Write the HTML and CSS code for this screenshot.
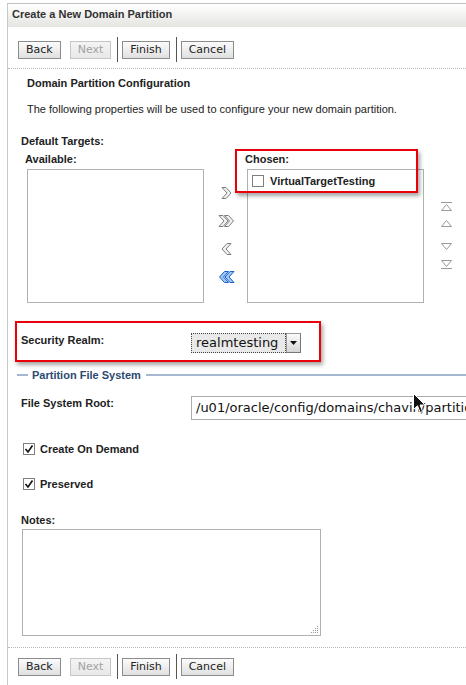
FILE: index.html
```html
<!DOCTYPE html>
<html>
<head>
<meta charset="utf-8">
<title>Create a New Domain Partition</title>
<link rel="stylesheet" href="styles.css">
</head>
<body>
<div class="panel">
  <div class="header">Create a New Domain Partition</div>
  <div class="btnbar">
    <span class="btn">Back</span>
    <span class="btn disabled">Next</span>
    <span class="sep"></span>
    <span class="btn">Finish</span>
    <span class="sep"></span>
    <span class="btn">Cancel</span>
  </div>
  <div class="dots"></div>

  <div class="lbl sec-title">Domain Partition Configuration</div>
  <div class="desc">The following properties will be used to configure your new domain partition.</div>

  <div class="lbl targets">Default Targets:</div>
  <div class="shuttle">
    <div class="col avail">
      <div class="lbl">Available:</div>
      <div class="listbox"></div>
    </div>
    <div class="moves">
      <svg width="11" height="14" viewBox="0 0 11 14"><polygon points="1,1.5 5,1.5 10,7 5,12.5 1,12.5 6,7" fill="#f2f2f2" stroke="#7e7e7e"/></svg>
      <svg width="17" height="14" viewBox="0 0 17 14"><polygon points="1,1.5 5,1.5 10,7 5,12.5 1,12.5 6,7" fill="#f2f2f2" stroke="#7e7e7e"/><polygon points="6.5,1.5 10.5,1.5 15.5,7 10.5,12.5 6.5,12.5 11.5,7" fill="#f2f2f2" stroke="#7e7e7e"/></svg>
      <svg width="11" height="14" viewBox="0 0 11 14"><polygon points="10,1.5 6,1.5 1,7 6,12.5 10,12.5 5,7" fill="#f2f2f2" stroke="#7e7e7e"/></svg>
      <svg width="17" height="14" viewBox="0 0 17 14"><polygon points="16,1.5 12,1.5 7,7 12,12.5 16,12.5 11,7" fill="#9ccbf7" stroke="#1c5fc4"/><polygon points="10.5,1.5 6.5,1.5 1.5,7 6.5,12.5 10.5,12.5 5.5,7" fill="#9ccbf7" stroke="#1c5fc4"/></svg>
    </div>
    <div class="col chosen">
      <div class="lbl">Chosen:</div>
      <div class="listbox">
        <div class="item">
          <svg class="cb" width="12" height="12" viewBox="0 0 12 12"><rect x="0.5" y="0.5" width="11" height="11" fill="#fff" stroke="#7f7f7f"/></svg>
          <span class="lbl">VirtualTargetTesting</span>
        </div>
      </div>
      <div class="hl hl-chosen"></div>
    </div>
    <div class="reorder">
      <svg class="r1" width="11" height="9" viewBox="0 0 11 9"><line x1="0" y1="0.5" x2="11" y2="0.5" stroke="#9a9a9a"/><polygon points="0.5,8.5 5.5,2.5 10.5,8.5" fill="none" stroke="#9a9a9a"/></svg>
      <svg class="r2" width="11" height="9" viewBox="0 0 11 9"><polygon points="0.5,7.5 5.5,1.5 10.5,7.5" fill="none" stroke="#9a9a9a"/></svg>
      <svg class="r3" width="11" height="9" viewBox="0 0 11 9"><polygon points="0.5,1.5 5.5,7.5 10.5,1.5" fill="none" stroke="#9a9a9a"/></svg>
      <svg class="r4" width="11" height="9" viewBox="0 0 11 9"><polygon points="0.5,0.5 5.5,6.5 10.5,0.5" fill="none" stroke="#9a9a9a"/><line x1="0" y1="8.5" x2="11" y2="8.5" stroke="#9a9a9a"/></svg>
    </div>
  </div>

  <div class="row realm">
    <div class="lbl rlabel">Security Realm:</div>
    <div class="select">
      <span class="val">realmtesting</span>
      <span class="arrow"><svg width="7" height="4" viewBox="0 0 7 4"><polygon points="0,0 7,0 3.5,4" fill="#111"/></svg></span>
    </div>
    <div class="hl hl-realm"></div>
  </div>

  <div class="legend">
    <span class="ln l"></span>
    <span class="t">Partition File System</span>
    <span class="ln r"></span>
  </div>

  <div class="row fsroot">
    <div class="lbl rlabel">File System Root:</div>
    <div class="input">/u01/oracle/config/domains/chavin/partitions</div>
  </div>

  <div class="check cod">
    <svg width="12" height="12" viewBox="0 0 12 12"><rect x="0.5" y="0.5" width="11" height="11" fill="#fff" stroke="#7f7f7f"/><polyline points="2.5,6 5,9 9.5,2.5" fill="none" stroke="#111" stroke-width="1.6"/></svg>
    <span>Create On Demand</span>
  </div>
  <div class="check pres">
    <svg width="12" height="12" viewBox="0 0 12 12"><rect x="0.5" y="0.5" width="11" height="11" fill="#fff" stroke="#7f7f7f"/><polyline points="2.5,6 5,9 9.5,2.5" fill="none" stroke="#111" stroke-width="1.6"/></svg>
    <span>Preserved</span>
  </div>

  <div class="lbl notes">Notes:</div>
  <div class="textarea">
    <svg class="grip" width="9" height="9" viewBox="0 0 9 9">
      <rect x="7" y="1" width="1" height="1" fill="#999"/>
      <rect x="5" y="3" width="1" height="1" fill="#999"/><rect x="7" y="3" width="1" height="1" fill="#999"/>
      <rect x="3" y="5" width="1" height="1" fill="#999"/><rect x="5" y="5" width="1" height="1" fill="#999"/><rect x="7" y="5" width="1" height="1" fill="#999"/>
      <rect x="1" y="7" width="1" height="1" fill="#999"/><rect x="3" y="7" width="1" height="1" fill="#999"/><rect x="5" y="7" width="1" height="1" fill="#999"/><rect x="7" y="7" width="1" height="1" fill="#999"/>
    </svg>
  </div>

  <div class="dots dots2"></div>
  <div class="btnbar btnbar2">
    <span class="btn">Back</span>
    <span class="btn disabled">Next</span>
    <span class="sep"></span>
    <span class="btn">Finish</span>
    <span class="sep"></span>
    <span class="btn">Cancel</span>
  </div>
</div>

<svg class="cursor" width="13" height="21" viewBox="0 0 13 21"><path d="M0.5,0.5 L0.5,16.5 L4.5,12.8 L7.2,19.5 L9.6,18.5 L7,12 L12,12 Z" fill="#111" stroke="#fff" stroke-width="1"/></svg>
</body>
</html>
```

FILE: styles.css
```css
* { box-sizing: border-box; }
html, body { margin: 0; padding: 0; overflow: hidden; background: #fff; }
body {
  font-family: "Liberation Sans", Arial, sans-serif;
  font-size: 11px;
  color: #222;
  position: relative;
  width: 466px;
  height: 685px;
}
.panel {
  margin: 3px 0 0 7px;
  border-left: 1px solid #c8c8c8;
  border-top: 1px solid #c2c2c2;
  height: 682px;
}
.header {
  height: 23px;
  line-height: 21px;
  padding-left: 4px;
  font-weight: bold;
  color: #333;
  background: linear-gradient(#ffffff, #e4e4e1);
}
.btnbar {
  display: flex;
  align-items: center;
  height: 25px;
  padding-left: 10px;
  margin-top: 10px;
}
.btnbar2 { margin-top: 6px; }
.btn {
  height: 18px;
  padding: 0 7px;
  border: 1px solid #8c8c8c;
  background: linear-gradient(#fbfbfb, #e0e0e0);
  font-family: "DejaVu Sans", sans-serif;
  font-size: 11px;
  line-height: 16px;
  color: #222;
}
.btn + .btn { margin-left: 9px; }
.btn.disabled {
  color: #a3a3a3;
  border-color: #c6c6c6;
  background: linear-gradient(#f4f4f4, #e8e8e8);
}
.sep {
  width: 1px;
  height: 25px;
  background: #555;
  margin: 0 4px 0 6px;
}
.dots { border-top: 1px dotted #b8b8b8; margin-top: 6px; }
.dots2 { margin-top: 11px; }

.lbl { font-weight: bold; line-height: 14px; }
.sec-title { margin: 7px 0 0 19px; }
.desc { margin: 12px 0 0 19px; line-height: 14px; }
.targets { margin: 18px 0 0 13px; }

.shuttle {
  display: flex;
  align-items: flex-start;
  margin-top: 4px;
}
.col { position: relative; width: 179px; flex-shrink: 0; }
.avail { margin-left: 17px; }
.listbox {
  margin: 3px 0 0 2px;
  width: 177px;
  height: 134px;
  border: 1px solid #b1b1b1;
  background: #fff;
}
.item {
  display: flex;
  align-items: center;
  gap: 6px;
  padding: 4px 0 0 4px;
}
.item .cb { flex-shrink: 0; }
.moves {
  width: 41px;
  flex-shrink: 0;
  display: flex;
  flex-direction: column;
  align-items: center;
  padding: 34px 0 0 3px;
  gap: 14px;
}
.reorder {
  display: flex;
  flex-direction: column;
  padding: 50px 0 0 17px;
}
.reorder .r2 { margin-top: 8px; }
.reorder .r3 { margin-top: 14px; }
.reorder .r4 { margin-top: 9px; }

.hl {
  position: absolute;
  border: 2px solid #e8000b;
  box-shadow: 2px 3px 4px rgba(0, 0, 0, 0.35);
}
.hl-chosen { left: -10px; top: -3px; width: 183px; height: 44px; }
.hl-realm { left: 7px; top: -12px; width: 306px; height: 41px; }

.row {
  display: flex;
  align-items: flex-start;
  padding-left: 13px;
  position: relative;
}
.rlabel { width: 170px; flex-shrink: 0; }
.realm { margin-top: 30px; }
.fsroot { margin-top: 14px; }

.select { display: flex; height: 20px; }
.select .val {
  width: 95px;
  height: 20px;
  border: 1px dotted #444;
  background: #e9e9e9;
  font-family: "DejaVu Sans", sans-serif;
  font-size: 13px;
  line-height: 18px;
  padding-left: 4px;
  color: #111;
}
.select .arrow {
  width: 15px;
  height: 20px;
  border: 1px solid #9a9a9a;
  border-right-color: #777;
  border-bottom-color: #777;
  background: linear-gradient(#fafafa, #d6d6d6);
  display: flex;
  align-items: center;
  justify-content: center;
}

.legend {
  display: flex;
  align-items: center;
  margin: 15px 0 0 9px;
}
.legend .ln { height: 2px; background: #a6b8d0; }
.legend .l { width: 11px; }
.legend .r { flex: 1; }
.legend .t {
  font-weight: bold;
  color: #2c4a72;
  line-height: 14px;
  margin: 0 5px 0 4px;
}

.input {
  width: 300px;
  height: 24px;
  flex-shrink: 0;
  border: 1px solid #ababab;
  font-family: "DejaVu Sans", sans-serif;
  font-size: 13px;
  line-height: 22px;
  padding-left: 4px;
  white-space: nowrap;
  overflow: hidden;
  color: #111;
}

.check {
  display: flex;
  align-items: center;
  gap: 5px;
  padding-left: 15px;
  font-weight: bold;
  line-height: 14px;
}
.cod { margin-top: 22px; }
.pres { margin-top: 21px; }
.notes { margin: 22px 0 0 13px; }
.textarea {
  margin: 2px 0 0 14px;
  width: 299px;
  height: 107px;
  border: 1px solid #b1b1b1;
  position: relative;
}
.grip { position: absolute; right: 1px; bottom: 1px; }

.cursor { position: absolute; left: 413px; top: 393px; }
```
